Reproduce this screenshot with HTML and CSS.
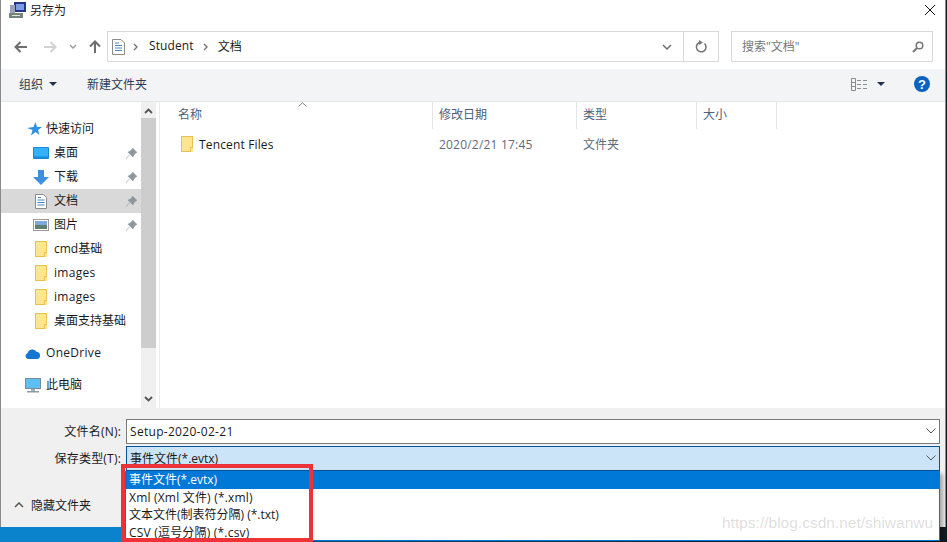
FILE: index.html
```html
<!DOCTYPE html>
<html lang="zh-CN">
<head>
    <meta charset="UTF-8">
    <title>另存为</title>
    <link rel="stylesheet" href="styles.css">
</head>
<body>
    <div class="dialog">
        <div class="title-bar">
            <svg class="app-icon" width="17" height="16" viewBox="0 0 17 16">
                <rect x="5" y="0" width="12" height="10" fill="#27358f"/>
                <rect x="7" y="2" width="8" height="6" fill="#7d9ce6"/>
                <rect x="1" y="3" width="5" height="8" fill="#98a2ba"/>
                <rect x="0" y="11" width="14" height="5" fill="#76857b"/>
                <rect x="3" y="13" width="8" height="1" fill="#dfe3df"/>
            </svg>
            <span class="title-text">另存为</span>
            <svg class="close-icon" width="12" height="12" viewBox="0 0 12 12">
                <path d="M1 1 L11 11 M11 1 L1 11" stroke="#111" stroke-width="1" fill="none"/>
            </svg>
        </div>

        <div class="nav-bar">
            <svg class="nav-btn" width="13" height="12" viewBox="0 0 13 12">
                <path d="M6.500 1 L1.500 6 L6.500 11 M2 6 H13" stroke="#6e6e6e" stroke-width="2" fill="none"/>
            </svg>
            <svg class="nav-btn forward" width="13" height="12" viewBox="0 0 13 12">
                <path d="M6.500 1 L11.500 6 L6.500 11 M11 6 H0" stroke="#d2d2d2" stroke-width="2" fill="none"/>
            </svg>
            <svg class="nav-drop" width="8" height="6" viewBox="0 0 8 6">
                <path d="M1 1 L4 4 L7 1" stroke="#9a9a9a" stroke-width="1.400" fill="none"/>
            </svg>
            <svg class="nav-btn up" width="12" height="13" viewBox="0 0 12 13">
                <path d="M1 6.500 L6 1.500 L11 6.500 M6 2 V13" stroke="#6e6e6e" stroke-width="2" fill="none"/>
            </svg>
            <div class="address-box">
                <svg class="address-icon" width="13" height="16" viewBox="0 0 13 16">
                    <path d="M.5.5 H9 L12.500 4 V15.500 H.5 Z" fill="#fff" stroke="#8a8a8a"/>
                    <path d="M3 4 H7 M3 6.500 H10 M3 9 H10 M3 11.500 H10" stroke="#4a86c0"/>
                </svg>
                <svg class="crumb-sep" width="5" height="8" viewBox="0 0 5 8">
                    <path d="M1 1 L4 4 L1 7" stroke="#777" stroke-width="1.400" fill="none"/>
                </svg>
                <span class="crumb">Student</span>
                <svg class="crumb-sep second" width="5" height="8" viewBox="0 0 5 8">
                    <path d="M1 1 L4 4 L1 7" stroke="#777" stroke-width="1.400" fill="none"/>
                </svg>
                <span class="crumb">文档</span>
                <div class="address-end">
                    <svg width="10" height="6" viewBox="0 0 10 6">
                        <path d="M1 1 L5 5 L9 1" stroke="#6e6e6e" stroke-width="1.500" fill="none"/>
                    </svg>
                </div>
                <div class="refresh">
                    <svg width="12" height="13" viewBox="0 0 12 13">
                        <path d="M4.500 2.500 A4.800 4.800 0 1 0 9.500 3.500" stroke="#777" stroke-width="1.600" fill="none"/>
                        <path d="M4 0 V5 L8 2.500 Z" fill="#777"/>
                    </svg>
                </div>
            </div>
            <div class="search-box">
                <span class="search-text">搜索"文档"</span>
                <svg width="12" height="12" viewBox="0 0 12 12">
                    <circle cx="7.500" cy="4.500" r="3.300" stroke="#777" stroke-width="1.500" fill="none"/>
                    <path d="M5 7 L1 11" stroke="#777" stroke-width="2"/>
                </svg>
            </div>
        </div>

        <div class="toolbar">
            <span class="tool-item">组织</span>
            <span class="tool-caret"></span>
            <span class="tool-item new-folder">新建文件夹</span>
            <svg class="view-icon" width="16" height="13" viewBox="0 0 16 13">
                <path d="M.5.500 H4.500 V12.500 H.5 Z M.5 4.500 H4.500 M.5 8.500 H4.500" stroke="#8a8a8a" fill="none"/>
                <path d="M6 2.500 H10 M12 2.500 H16 M6 6.500 H10 M12 6.500 H16 M6 10.500 H10 M12 10.500 H16" stroke="#8f8f8f"/>
            </svg>
            <span class="tool-caret view-caret"></span>
            <span class="help">?</span>
        </div>

        <div class="main">
            <div class="sidebar">
                <div class="tree">
                    <div class="tree-row top-level">
                        <svg width="15" height="14" viewBox="0 0 15 14">
                            <path d="M8.500 0 L10 5 L15 5 L11 8 L12.500 13 L8.500 10 L4 13.500 L5.500 8 L0 6 L6.500 5 Z" fill="#2f8fe0"/>
                        </svg>
                        <span class="tree-label">快速访问</span>
                    </div>
                    <div class="tree-row">
                        <span class="tree-icon">
                            <svg width="16" height="12" viewBox="0 0 16 12">
                                <rect width="16" height="12" rx="1" fill="#1a86d8"/>
                                <rect x="1" y="1" width="14" height="8.500" fill="#35b1f5"/>
                            </svg>
                        </span>
                        <span class="tree-label">桌面</span>
                        <svg class="pin" width="11" height="11" viewBox="0 0 11 11">
                            <path d="M6.500 0 L11 4.500 L9.500 5 L7.500 7.500 L7 9 L2 4 L3.500 3.500 L6 1.500 Z M3.500 6.500 L0 11" fill="#8c97a0" stroke="#8c97a0" stroke-width=".6"/>
                        </svg>
                    </div>
                    <div class="tree-row">
                        <span class="tree-icon">
                            <svg width="16" height="15" viewBox="0 0 16 15">
                                <path d="M5 0 H11 V7 H16 L8 15 L0 7 H5 Z" fill="#3d8fe0"/>
                            </svg>
                        </span>
                        <span class="tree-label">下载</span>
                        <svg class="pin" width="11" height="11" viewBox="0 0 11 11">
                            <path d="M6.500 0 L11 4.500 L9.500 5 L7.500 7.500 L7 9 L2 4 L3.500 3.500 L6 1.500 Z M3.500 6.500 L0 11" fill="#8c97a0" stroke="#8c97a0" stroke-width=".6"/>
                        </svg>
                    </div>
                    <div class="tree-row selected">
                        <span class="tree-icon">
                            <svg width="12" height="15" viewBox="0 0 12 15">
                                <path d="M.5.500 H8.500 L11.500 3.500 V14.500 H.5 Z" fill="#fff" stroke="#8a8a8a"/>
                                <path d="M3 3.500 H6 M2.500 6 H9.500 M2.500 8.500 H9.500 M2.500 11 H9.500" stroke="#3f82c4"/>
                            </svg>
                        </span>
                        <span class="tree-label">文档</span>
                        <svg class="pin" width="11" height="11" viewBox="0 0 11 11">
                            <path d="M6.500 0 L11 4.500 L9.500 5 L7.500 7.500 L7 9 L2 4 L3.500 3.500 L6 1.500 Z M3.500 6.500 L0 11" fill="#8c97a0" stroke="#8c97a0" stroke-width=".6"/>
                        </svg>
                    </div>
                    <div class="tree-row">
                        <span class="tree-icon">
                            <svg width="16" height="12" viewBox="0 0 16 12">
                                <rect x=".5" y=".5" width="15" height="11" fill="#fff" stroke="#9a9a9a"/>
                                <rect x="2" y="2" width="12" height="4" fill="#7fa9d8"/>
                                <rect x="2" y="6" width="12" height="4" fill="#5c7f70"/>
                            </svg>
                        </span>
                        <span class="tree-label">图片</span>
                        <svg class="pin" width="11" height="11" viewBox="0 0 11 11">
                            <path d="M6.500 0 L11 4.500 L9.500 5 L7.500 7.500 L7 9 L2 4 L3.500 3.500 L6 1.500 Z M3.500 6.500 L0 11" fill="#8c97a0" stroke="#8c97a0" stroke-width=".6"/>
                        </svg>
                    </div>
                    <div class="tree-row">
                        <span class="tree-icon"><span class="folder"></span></span>
                        <span class="tree-label">cmd基础</span>
                    </div>
                    <div class="tree-row">
                        <span class="tree-icon"><span class="folder"></span></span>
                        <span class="tree-label latin">images</span>
                    </div>
                    <div class="tree-row">
                        <span class="tree-icon"><span class="folder"></span></span>
                        <span class="tree-label latin">images</span>
                    </div>
                    <div class="tree-row">
                        <span class="tree-icon"><span class="folder"></span></span>
                        <span class="tree-label">桌面支持基础</span>
                    </div>
                    <div class="tree-row top-level group-start">
                        <svg width="16" height="11" viewBox="0 0 16 11">
                            <path d="M3 11 A3 3 0 0 1 2.500 5.200 A5 5 0 0 1 11.500 3.800 A3.700 3.700 0 0 1 12.500 11 Z" fill="#1577d2"/>
                        </svg>
                        <span class="tree-label latin">OneDrive</span>
                    </div>
                    <div class="tree-row top-level group-start">
                        <svg width="16" height="15" viewBox="0 0 16 15">
                            <rect x=".5" y=".5" width="15" height="10" fill="#5cc0f5" stroke="#7b8a96"/>
                            <rect x="6" y="11" width="4" height="2" fill="#9fb0bc"/>
                            <rect x="2" y="13" width="12" height="1.500" fill="#8a9aa6"/>
                        </svg>
                        <span class="tree-label">此电脑</span>
                    </div>
                </div>
                <div class="scrollbar">
                    <svg class="scroll-arrow" width="9" height="6" viewBox="0 0 9 6">
                        <path d="M1 5 L4.500 1.500 L8 5" stroke="#555" stroke-width="1.800" fill="none"/>
                    </svg>
                    <div class="scroll-thumb"></div>
                    <svg class="scroll-arrow bottom" width="9" height="6" viewBox="0 0 9 6">
                        <path d="M1 1 L4.500 4.500 L8 1" stroke="#555" stroke-width="1.800" fill="none"/>
                    </svg>
                </div>
            </div>

            <div class="file-pane">
                <div class="col-header">
                    <div class="col col-name">名称<svg class="sort-mark" width="9" height="5" viewBox="0 0 9 5"><path d="M.5 4.500 L4.500 .8 L8.500 4.500" stroke="#888" fill="none"/></svg></div>
                    <div class="col col-date">修改日期</div>
                    <div class="col col-type">类型</div>
                    <div class="col col-size">大小</div>
                </div>
                <div class="file-row">
                    <div class="col-name file-name"><span class="folder"></span><span class="file-title">Tencent Files</span></div>
                    <div class="col-date file-meta file-date">2020/2/21 17:45</div>
                    <div class="col-type file-meta">文件夹</div>
                </div>
            </div>
        </div>

        <div class="form-area">
            <div class="form-row">
                <label class="form-label">文件名(N):</label>
                <div class="combo">
                    <span class="combo-value">Setup-2020-02-21</span>
                    <svg width="10" height="6" viewBox="0 0 10 6"><path d="M.5 .5 L5 5 L9.500 .5" stroke="#555" fill="none"/></svg>
                </div>
            </div>
            <div class="form-row">
                <label class="form-label">保存类型(T):</label>
                <div class="combo open">
                    <span>事件文件(*.evtx)</span>
                    <svg width="10" height="6" viewBox="0 0 10 6"><path d="M.5 .5 L5 5 L9.500 .5" stroke="#555" fill="none"/></svg>
                </div>
            </div>
            <div class="hide-folders">
                <svg width="10" height="6" viewBox="0 0 10 6"><path d="M1 5 L5 1 L9 5" stroke="#555" stroke-width="1.500" fill="none"/></svg>
                <span>隐藏文件夹</span>
            </div>
        </div>

        <div class="type-list">
            <div class="type-item active">事件文件(*.evtx)</div>
            <div class="type-item wide">Xml (Xml 文件) (*.xml)</div>
            <div class="type-item">文本文件(制表符分隔) (*.txt)</div>
            <div class="type-item wide">CSV (逗号分隔) (*.csv)</div>
        </div>
        <div class="red-box"></div>
        <div class="watermark">https://blog.csdn.net/shiwanwu</div>
    </div>
</body>
</html>
```

FILE: styles.css
```css
html, body {
    margin: 0;
    padding: 0;
    height: 542px;
    overflow: hidden;
}

body {
    background: linear-gradient(to right, #0b82cc 0, #0b82cc 125px, #101a22 900px);
    font-family: "Open Sans", "Noto Sans CJK SC", sans-serif;
    font-size: 12px;
    color: #1a1a1a;
}

svg {
    display: block;
    flex: none;
}

.dialog {
    position: relative;
    box-sizing: border-box;
    width: 946px;
    height: 527px;
    background: #fff;
    border-left: 1px solid #8a8a8a;
    border-right: 1px solid #8a8a8a;
}

.title-bar {
    display: flex;
    align-items: center;
    height: 20px;
    padding-left: 8px;
}

.title-text {
    margin-left: 4px;
}

.close-icon {
    margin-left: auto;
    margin-right: 9px;
}

.nav-bar {
    display: flex;
    align-items: center;
    height: 31px;
    margin-top: 11px;
    padding-left: 13px;
}

.forward {
    margin-left: 17px;
}

.nav-drop {
    margin-left: 12px;
}

.up {
    margin-left: 12px;
}

.address-box {
    display: flex;
    align-items: center;
    box-sizing: border-box;
    width: 612px;
    height: 31px;
    margin-left: 6px;
    padding-left: 4px;
    border: 1px solid #d9d9d9;
}

.crumb-sep {
    margin: 0 11px 0 8px;
}

.crumb-sep.second {
    margin-left: 9px;
    margin-right: 10px;
}

.crumb {
    margin-bottom: 2px;
    letter-spacing: 0.1px;
}

.address-end {
    display: flex;
    align-items: center;
    justify-content: flex-end;
    align-self: stretch;
    margin-left: auto;
    width: 34px;
    padding-right: 11px;
    box-sizing: border-box;
    border-right: 1px solid #d9d9d9;
}

.refresh {
    display: flex;
    align-items: center;
    justify-content: center;
    width: 34px;
}

.search-box {
    display: flex;
    align-items: center;
    justify-content: space-between;
    box-sizing: border-box;
    width: 202px;
    height: 31px;
    margin-left: 12px;
    padding: 0 8px 0 10px;
    border: 1px solid #d9d9d9;
}

.search-text {
    margin-bottom: 2px;
    color: #777;
}

.toolbar {
    display: flex;
    align-items: center;
    height: 30px;
    margin-top: 7px;
    padding: 0 0 2px 18px;
    background: #f3f4f6;
    border-bottom: 1px solid #e6e6e6;
    color: #2b3a50;
}

.tool-caret {
    width: 0;
    height: 0;
    margin-left: 6px;
    border-left: 4px solid transparent;
    border-right: 4px solid transparent;
    border-top: 4px solid #1f3050;
}

.new-folder {
    margin-left: 30px;
}

.view-icon {
    margin-left: auto;
}

.view-caret {
    margin-left: 10px;
}

.help {
    display: flex;
    align-items: center;
    justify-content: center;
    width: 16px;
    height: 16px;
    margin: 0 15px 0 29px;
    border-radius: 50%;
    background: #0d62c0;
    color: #fff;
    font: bold 13px "Liberation Sans", sans-serif;
}

.main {
    display: flex;
    height: 306px;
}

.sidebar {
    display: flex;
    width: 159px;
    padding-right: 3px;
    box-sizing: border-box;
    border-right: 1px solid #ececec;
}

.tree {
    flex: 1;
    padding-top: 15px;
}

.tree-row {
    display: flex;
    align-items: center;
    height: 24px;
}

.tree-label {
    margin-bottom: 2px;
}

.latin {
    letter-spacing: 0.3px;
}

.top-level {
    padding-left: 26px;
}

.top-level svg {
    margin-right: 4px;
}

.top-level.group-start {
    padding-left: 24px;
    margin-top: 8px;
}

.top-level.group-start svg {
    margin-right: 5px;
}

.tree-icon {
    display: flex;
    justify-content: center;
    width: 16px;
    margin-left: 32px;
    margin-right: 5px;
}

.pin {
    margin-left: auto;
    margin-right: 4px;
}

.selected {
    background: #d9d9d9;
}

.folder {
    position: relative;
    display: block;
    box-sizing: border-box;
    width: 12px;
    height: 16px;
    background: #fde68f;
    border: 1px solid #e8c24e;
}

/* little tab at the bottom right of the folder */
.folder::after {
    content: "";
    position: absolute;
    right: -1px;
    bottom: -1px;
    width: 2px;
    height: 4px;
    background: #fde68f;
    border-left: 1px solid #e8c24e;
    border-top: 1px solid #e8c24e;
}

.scrollbar {
    position: relative;
    width: 15px;
    background: #f0f0f0;
}

.scroll-arrow {
    position: absolute;
    top: 6px;
    left: 3px;
}

.scroll-arrow.bottom {
    top: auto;
    bottom: 6px;
}

.scroll-thumb {
    height: 230px;
    margin-top: 16px;
    background: #cdcdcd;
}

.file-pane {
    flex: 1;
}

.col-header {
    display: flex;
    height: 27px;
    color: #4c607a;
}

.col {
    position: relative;
    box-sizing: border-box;
    line-height: 25px;
    border-right: 1px solid #e5e5e5;
    padding-left: 6px;
}

.col-name {
    width: 273px;
}

.col.col-name {
    padding-left: 18px;
}

.col-date {
    width: 144px;
}

.col-type {
    width: 120px;
}

.col-size {
    width: 80px;
}

.sort-mark {
    position: absolute;
    top: 0;
    left: 138px;
}

.file-row {
    display: flex;
    align-items: center;
    height: 24px;
    margin-top: 3px;
}

.file-name {
    display: flex;
    align-items: center;
    box-sizing: border-box;
    padding-left: 21px;
}

.file-name .folder {
    margin-right: 6px;
}

.file-title {
    letter-spacing: 0.15px;
}

.file-meta {
    box-sizing: border-box;
    padding-left: 6px;
    color: #5f6b7a;
}

.file-date {
    letter-spacing: 0.2px;
}

.form-area {
    position: relative;
    height: 119px;
    padding-top: 11px;
    box-sizing: border-box;
    background: #f0f0f0;
}

.form-row {
    display: flex;
    align-items: center;
    justify-content: flex-end;
    height: 24px;
    margin-bottom: 3px;
    padding-right: 5px;
}

.form-label {
    margin-right: 5px;
    letter-spacing: 0.2px;
}

.combo {
    display: flex;
    align-items: center;
    justify-content: space-between;
    box-sizing: border-box;
    width: 814px;
    height: 25px;
    padding: 0 3px;
    background: #fff;
    border: 1px solid #7a7a7a;
}

.combo-value {
    letter-spacing: 0.3px;
}

.combo.open {
    background: #cce4f7;
    border-color: #005499;
}

.hide-folders {
    position: absolute;
    left: 13px;
    top: 88px;
    display: flex;
    align-items: center;
    gap: 7px;
}

.type-list {
    position: absolute;
    left: 124px;
    top: 471px;
    box-sizing: border-box;
    width: 815px;
    height: 70px;
    background: #fff;
    border: 1px solid #0078d7;
    border-top: 0;
    box-shadow: 3px 3px 4px rgba(0, 0, 0, 0.3);
}

.type-item {
    height: 17.400px;
    padding-left: 3px;
    line-height: 17px;
}

.type-item.wide {
    letter-spacing: 0.2px;
}

.type-item.active {
    height: 18px;
    line-height: 18px;
    background: #0078d7;
    color: #fff;
}

.red-box {
    position: absolute;
    left: 120px;
    top: 464px;
    box-sizing: border-box;
    width: 192px;
    height: 78px;
    border: 4px solid #ee3338;
}

.watermark {
    position: absolute;
    left: 721px;
    top: 514px;
    font-family: "Liberation Sans", sans-serif;
    font-size: 15.500px;
    color: rgba(120, 120, 120, 0.25);
    white-space: nowrap;
}
```
